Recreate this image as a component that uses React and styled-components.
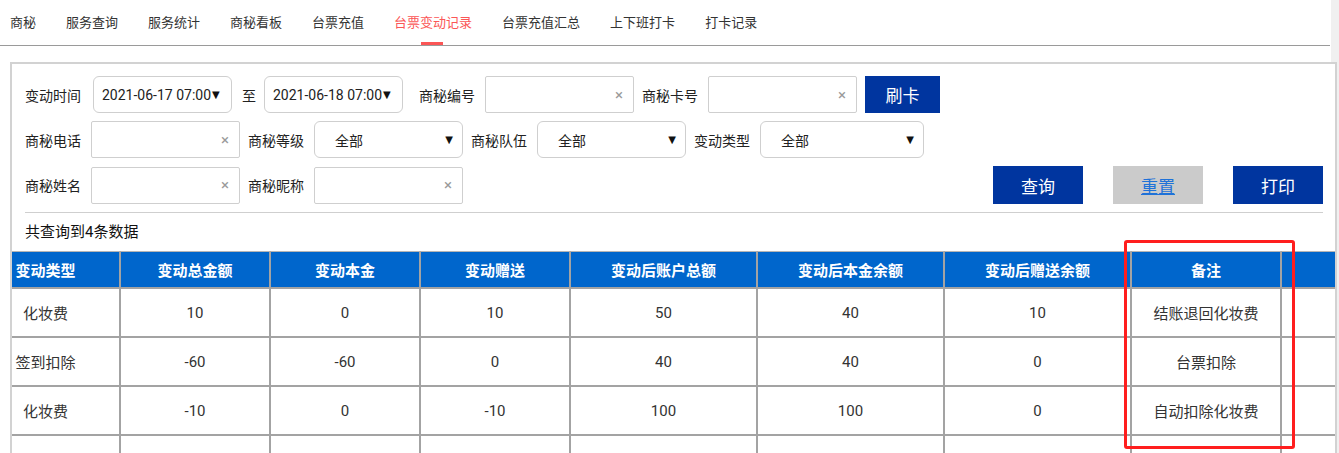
import React from "react";
import styled, { createGlobalStyle } from "styled-components";

const GlobalStyle = createGlobalStyle`
  html, body { margin: 0; padding: 0; }
  body {
    font-family: Roboto, "Noto Sans CJK SC", sans-serif;
    background: linear-gradient(to right, #ffffff 1331px, #f0f0f0 1331px);
    color: #222;
  }
`;

const Page = styled.div`
  position: relative;
  width: 1339px;
  height: 453px;
  overflow: hidden;
`;

const TabBar = styled.nav`
  display: flex;
  gap: 30px;
  box-sizing: border-box;
  width: 1330px;
  height: 46px;
  padding-left: 10px;
  border-bottom: 1px solid #9a9a9a;
`;

const Tab = styled.div`
  position: relative;
  height: 45px;
  line-height: 45px;
  font-size: 13px;
  color: ${(p) => (p.$active ? "#fb5656" : "#333")};
  white-space: nowrap;
  &::after {
    content: "";
    display: ${(p) => (p.$active ? "block" : "none")};
    position: absolute;
    left: 50%;
    bottom: 0;
    width: 22px;
    height: 3px;
    margin-left: -12px;
    background: #fb5656;
  }
`;

const Panel = styled.section`
  box-sizing: border-box;
  width: 1327px;
  margin: 16px 0 0 10px;
  border: 2px solid #d2d2d2;
  border-bottom: none;
  background: #fff;
  height: 400px;
`;

const FormArea = styled.div`
  padding: 12px 12px 0 13px;
`;

const Row = styled.div`
  display: flex;
  align-items: center;
  gap: 8px;
  height: ${(p) => p.$h || 37}px;
  & + & {
    margin-top: 8px;
  }
`;

const Label = styled.span`
  font-size: 14px;
  color: #222;
  white-space: nowrap;
  margin-right: ${(p) => (p.$wide ? 4 : 2)}px;
  margin-left: ${(p) => (p.$spaced ? 8 : 0)}px;
`;

const Sep = styled.span`
  font-size: 14px;
  color: #222;
  margin: 0 0 0 2px;
`;

const Select = styled.div`
  box-sizing: border-box;
  display: flex;
  align-items: center;
  justify-content: ${(p) => (p.$date ? "flex-start" : "space-between")};
  width: ${(p) => p.$w}px;
  height: 37px;
  padding: ${(p) => (p.$date ? "0 0 0 8px" : "0 9px 0 20px")};
  border: 1px solid #cfcfcf;
  border-radius: 6px;
  font-size: 14px;
  color: #222;
  white-space: nowrap;
`;

const Caret = styled.span`
  font-family: "DejaVu Sans", sans-serif;
  font-size: 10px;
  color: #111;
  margin-left: 1px;
`;

const Input = styled.div`
  box-sizing: border-box;
  display: flex;
  align-items: center;
  justify-content: flex-end;
  width: 149px;
  height: ${(p) => p.$h || 37}px;
  padding-right: 10px;
  border: 1px solid #cfcfcf;
  border-radius: 2px;
  color: #9a9a9a;
  font-size: 15px;
`;

const Button = styled.button`
  box-sizing: border-box;
  width: ${(p) => p.$w || 90}px;
  height: ${(p) => p.$h || 38}px;
  border: none;
  border-radius: 0;
  padding: 0;
  font-family: Roboto, "Noto Sans CJK SC", sans-serif;
  font-size: 17px;
  background: ${(p) => (p.$muted ? "#cbcbcb" : "#00359f")};
  color: ${(p) => (p.$muted ? "#1f72d8" : "#fff")};
  text-decoration: ${(p) => (p.$muted ? "underline" : "none")};
`;

const Actions = styled.div`
  display: flex;
  gap: 30px;
  margin-left: auto;
`;

const Divider = styled.hr`
  margin: 8px 0 0;
  border: none;
  border-top: 1px solid #cfcfcf;
`;

const Summary = styled.div`
  height: 38px;
  line-height: 38px;
  padding-left: 13px;
  font-size: 15px;
  color: #111;
`;

const Table = styled.table`
  width: 1323px;
  table-layout: fixed;
  border-collapse: separate;
  border-spacing: 0;
`;

const Th = styled.th`
  box-sizing: border-box;
  height: 38px;
  padding: 0 ${(p) => (p.$first ? 40 : 0)}px 0 0;
  background: #0066cc;
  color: #fff;
  font-size: 15px;
  font-weight: 700;
  text-align: center;
  border-top: 1px solid #b5b5b5;
  border-bottom: 2px solid #a3a3a3;
  border-right: ${(p) => (p.$last ? "none" : "2px solid #a3a3a3")};
`;

const Td = styled.td`
  box-sizing: border-box;
  height: 49px;
  padding: 0 ${(p) => (p.$first ? 40 : 0)}px 0 0;
  font-size: 15px;
  color: #333;
  text-align: center;
  border-bottom: 2px solid #a3a3a3;
  border-right: ${(p) => (p.$last ? "none" : "2px solid #a3a3a3")};
  white-space: nowrap;
`;

const Highlight = styled.div`
  position: absolute;
  left: 1124px;
  top: 240px;
  width: 171px;
  height: 209px;
  box-sizing: border-box;
  border: 3px solid #ff1e1e;
  border-radius: 3px;
  pointer-events: none;
`;

const tabs = [
  "商秘",
  "服务查询",
  "服务统计",
  "商秘看板",
  "台票充值",
  "台票变动记录",
  "台票充值汇总",
  "上下班打卡",
  "打卡记录",
];

const widths = [109, 150, 150, 150, 187, 187, 187, 150, 53];
const headers = [
  "变动类型",
  "变动总金额",
  "变动本金",
  "变动赠送",
  "变动后账户总额",
  "变动后本金余额",
  "变动后赠送余额",
  "备注",
  "",
];
const rows = [
  ["化妆费", "10", "0", "10", "50", "40", "10", "结账退回化妆费", ""],
  ["签到扣除", "-60", "-60", "0", "40", "40", "0", "台票扣除", ""],
  ["化妆费", "-10", "0", "-10", "100", "100", "0", "自动扣除化妆费", ""],
  ["", "", "", "", "", "", "", "", ""],
];

const Clear = () => <Input>×</Input>;
const Drop = ({ w = 149 }) => (
  <Select $w={w}>
    <span>全部</span>
    <Caret>▼</Caret>
  </Select>
);
const DateSel = ({ value }) => (
  <Select $date $w={139}>
    {value}
    <Caret>▼</Caret>
  </Select>
);

export default function App() {
  return (
    <>
      <GlobalStyle />
      <Page>
        <TabBar>
          {tabs.map((t) => (
            <Tab key={t} $active={t === "台票变动记录"}>
              {t}
            </Tab>
          ))}
        </TabBar>
        <Panel>
          <FormArea>
            <Row>
              <Label $wide>变动时间</Label>
              <DateSel value="2021-06-17 07:00" />
              <Sep>至</Sep>
              <DateSel value="2021-06-18 07:00" />
              <Label $spaced>商秘编号</Label>
              <Clear />
              <Label>商秘卡号</Label>
              <Clear />
              <Button $w={75} $h={37}>刷卡</Button>
            </Row>
            <Row>
              <Label>商秘电话</Label>
              <Clear />
              <Label>商秘等级</Label>
              <Drop />
              <Label>商秘队伍</Label>
              <Drop />
              <Label>变动类型</Label>
              <Drop w={164} />
            </Row>
            <Row $h={38}>
              <Label>商秘姓名</Label>
              <Clear />
              <Label>商秘昵称</Label>
              <Clear />
              <Actions>
                <Button>查询</Button>
                <Button $muted>重置</Button>
                <Button>打印</Button>
              </Actions>
            </Row>
            <Divider />
          </FormArea>
          <Summary>共查询到4条数据</Summary>
          <Table>
            <colgroup>
              {widths.map((w, i) => (
                <col key={i} style={{ width: w }} />
              ))}
            </colgroup>
            <thead>
              <tr>
                {headers.map((h, i) => (
                  <Th key={i} $first={i === 0} $last={i === headers.length - 1}>
                    {h}
                  </Th>
                ))}
              </tr>
            </thead>
            <tbody>
              {rows.map((r, ri) => (
                <tr key={ri}>
                  {r.map((c, ci) => (
                    <Td key={ci} $first={ci === 0} $last={ci === r.length - 1}>
                      {c}
                    </Td>
                  ))}
                </tr>
              ))}
            </tbody>
          </Table>
        </Panel>
        <Highlight />
      </Page>
    </>
  );
}
